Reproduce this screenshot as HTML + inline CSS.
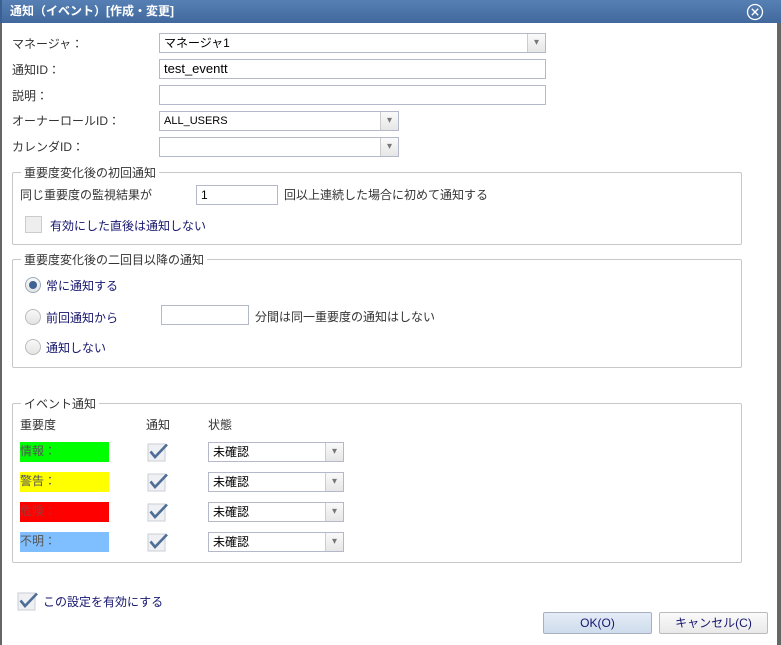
<!DOCTYPE html>
<html><head><meta charset="utf-8"><style>
*{box-sizing:border-box;margin:0;padding:0}
body{width:781px;height:645px;background:#fff;font-family:"Liberation Sans","Noto Sans CJK JP",sans-serif;font-size:12px;color:#333;position:relative;overflow:hidden}
.a{position:absolute;white-space:nowrap}
.title{left:0;top:0;width:781px;height:23px;background:linear-gradient(#5680b5,#41699e);color:#fff;font-weight:bold;font-size:12px;line-height:23px;padding:0 8px;border-left:2px solid #3a5f90}
.frame{left:0;top:23px;width:781px;height:622px;border-left:2px solid #666;border-right:4px solid #666}
.inp{position:absolute;height:20px;border:1px solid #b5b8c8;background:#fff;padding:0 4px;line-height:18px;font-size:12px;color:#000}
.sel{position:absolute;height:20px;border:1px solid #b5b8c8;background:#fff;padding:0 4px;line-height:18px;font-size:11px;color:#000}
.sel::after{content:"▾";position:absolute;right:0;top:0;width:17px;height:18px;border-left:1px solid #ccc;background:linear-gradient(#fafafa,#e6e6e6);color:#777;font-size:10px;text-align:center;line-height:18px}
fieldset{position:absolute;border:1px solid #c8c8c8;border-radius:2px}
legend{margin-left:8px;padding:0 3px;color:#333;font-size:12px}
.nv{color:#15156e}
.radio{position:absolute;width:16px;height:16px;border-radius:50%;border:1px solid #bbb;background:linear-gradient(#f8f8f8,#e4e4e4)}
.btn{position:absolute;height:22px;border:1px solid #a8b0c0;border-radius:2px;text-align:center;line-height:20px;color:#15156e;font-size:12px}
</style></head><body>
<div class="a title">通知（イベント）[作成・変更]</div>
<svg class="a" style="left:746px;top:3px" width="18" height="18"><circle cx="9" cy="9" r="7.5" fill="none" stroke="#fff" stroke-width="1.3"/><path d="M5.8 5.8L12.2 12.2M12.2 5.8L5.8 12.2" stroke="#fff" stroke-width="1.4"/></svg>
<div class="a frame"></div>

<div class="a" style="left:12px;top:35px">マネージャ：</div>
<div class="sel" style="left:159px;top:33px;width:387px;font-size:12px">マネージャ1</div>
<div class="a" style="left:12px;top:61px">通知ID：</div>
<div class="inp" style="left:159px;top:59px;width:387px;font-size:13px">test_eventt</div>
<div class="a" style="left:12px;top:87px">説明：</div>
<div class="inp" style="left:159px;top:85px;width:387px"></div>
<div class="a" style="left:12px;top:112px">オーナーロールID：</div>
<div class="sel" style="left:159px;top:111px;width:240px">ALL_USERS</div>
<div class="a" style="left:12px;top:138px">カレンダID：</div>
<div class="sel" style="left:159px;top:137px;width:240px"></div>

<fieldset style="left:12px;top:164px;width:730px;height:81px"><legend>重要度変化後の初回通知</legend></fieldset>
<div class="a" style="left:20px;top:186px">同じ重要度の監視結果が</div>
<div class="inp" style="left:196px;top:185px;width:82px">1</div>
<div class="a" style="left:284px;top:186px">回以上連続した場合に初めて通知する</div>
<div class="a" style="left:25px;top:216px;width:17px;height:17px;border:1px solid #ccc;background:#eee"></div>
<div class="a nv" style="left:50px;top:217px">有効にした直後は通知しない</div>

<fieldset style="left:12px;top:251px;width:730px;height:117px"><legend>重要度変化後の二回目以降の通知</legend></fieldset>
<div class="radio" style="left:25px;top:277px;border-color:#9ab"><div style="position:absolute;left:3px;top:3px;width:8px;height:8px;border-radius:50%;background:#3e6395"></div></div>
<div class="a nv" style="left:46px;top:277px">常に通知する</div>
<div class="radio" style="left:25px;top:309px"></div>
<div class="a nv" style="left:46px;top:309px">前回通知から</div>
<div class="inp" style="left:161px;top:305px;width:88px"></div>
<div class="a" style="left:255px;top:308px">分間は同一重要度の通知はしない</div>
<div class="radio" style="left:25px;top:339px"></div>
<div class="a nv" style="left:46px;top:339px">通知しない</div>

<fieldset style="left:12px;top:395px;width:730px;height:168px"><legend>イベント通知</legend></fieldset>
<div class="a" style="left:20px;top:416px">重要度</div>
<div class="a" style="left:146px;top:416px">通知</div>
<div class="a" style="left:208px;top:416px">状態</div>

<div class="a" style="left:20px;top:442px;width:89px;height:20px;background:#00ff00;line-height:18px;color:#555">情報：</div>
<div class="a" style="left:20px;top:472px;width:89px;height:20px;background:#ffff00;line-height:18px;color:#555">警告：</div>
<div class="a" style="left:20px;top:502px;width:89px;height:20px;background:#ff0000;line-height:18px;color:#a33">危険：</div>
<div class="a" style="left:20px;top:532px;width:89px;height:20px;background:#80bfff;line-height:18px;color:#555">不明：</div>

<svg class="a" style="left:147px;top:442px" width="22" height="112">
<defs><g id="c"><rect x="1" y="2" width="17" height="17" fill="#eef0f3" stroke="#c9ced6"/><path d="M3.5 9.5l4.5 5.5L20 2.5" fill="none" stroke="#4f6e96" stroke-width="2.6"/></g></defs>
<use href="#c"/><use href="#c" y="30"/><use href="#c" y="60"/><use href="#c" y="90"/></svg>

<div class="sel" style="left:208px;top:442px;width:136px;font-size:12px">未確認</div>
<div class="sel" style="left:208px;top:472px;width:136px;font-size:12px">未確認</div>
<div class="sel" style="left:208px;top:502px;width:136px;font-size:12px">未確認</div>
<div class="sel" style="left:208px;top:532px;width:136px;font-size:12px">未確認</div>

<svg class="a" style="left:17px;top:591px" width="22" height="20"><rect x="1" y="2" width="17" height="17" fill="#eef0f3" stroke="#c9ced6"/><path d="M3.5 9.5l4.5 5.5L20 2.5" fill="none" stroke="#4f6e96" stroke-width="2.6"/></svg>
<div class="a nv" style="left:43px;top:593px">この設定を有効にする</div>

<div class="btn" style="left:543px;top:612px;width:109px;background:linear-gradient(#e4ecf7,#cfdcec)">OK(O)</div>
<div class="btn" style="left:659px;top:612px;width:109px;background:linear-gradient(#fafafa,#e9e9e9);border-color:#bbb">キャンセル(C)</div>
</body></html>
